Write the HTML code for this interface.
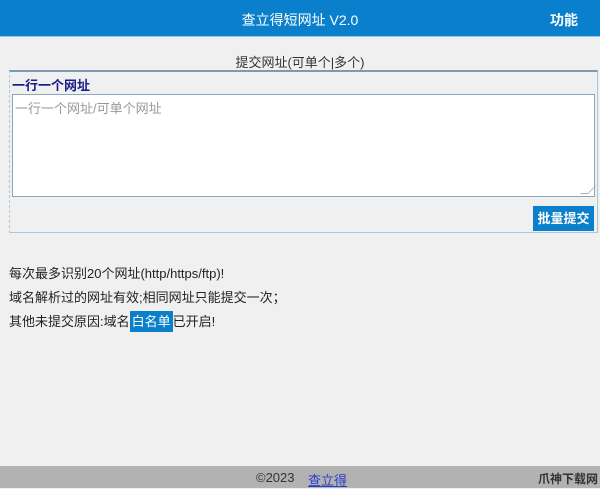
<!DOCTYPE html>
<html><head><meta charset="utf-8"><style>
*{margin:0;padding:0;box-sizing:border-box}
body{width:600px;height:488px;background:#f0f0f0;font-family:"Liberation Sans","Noto Sans CJK SC",sans-serif;position:relative;overflow:hidden;color:#222}
.hd{position:absolute;left:0;top:0;width:600px;height:37px;background:#0a7fcb;border-bottom:1px solid #8fc7ea}
.hd .t{position:absolute;left:0;width:600px;text-align:center;top:10px;color:#fff;font-size:14px}
.hd .f{position:absolute;right:22px;top:10px;color:#fff;font-size:14px;font-weight:bold}
.title{position:absolute;top:52px;width:600px;text-align:center;font-size:13px;color:#333}
.box{position:absolute;left:9px;top:70px;width:589px;height:163px;border:1px solid #a9c6da;border-top:2px solid #7a9bb2;border-left:1px dashed #b5c8d6}
.lbl{position:absolute;left:2px;top:3px;font-size:13px;font-weight:bold;color:#1a1a8c}
.ta{position:absolute;left:2px;top:22px;width:583px;height:103px;background:#fff;border:1px solid #8aa7bc;font-size:13px;color:#999;padding:3px 2px}
.ta i{position:absolute;right:2px;bottom:2px;width:8px;height:8px;border-right:1px solid #aaa;border-bottom:1px solid #aaa;transform:skewX(-45deg)}
.btn{position:absolute;left:523px;top:134px;width:61px;height:25px;background:#0a7fcb;color:#fff;font-size:13px;font-weight:bold;text-align:center;line-height:25px}
.n{position:absolute;left:9px;font-size:13px;color:#222}
.hl{background:#0a7fcb;color:#fff;padding:3px 2px}
.ft{position:absolute;left:0;top:466px;width:600px;height:22px;background:#b2b2b2;font-size:13px;color:#333}
.ft .c{position:absolute;left:256px;top:4px}
.ft a{position:absolute;left:308px;top:4px;color:#2a3fc8;text-decoration:underline}
.ft .w{position:absolute;right:2px;top:4px;color:#333;font-weight:bold;font-size:12px}
</style></head><body>
<div class="hd"><div class="t">查立得短网址 V2.0</div><div class="f">功能</div></div>
<div class="title">提交网址(可单个|多个)</div>
<div class="box">
<div class="lbl">一行一个网址</div>
<div class="ta">一行一个网址/可单个网址<i></i></div>
<div class="btn">批量提交</div>
</div>
<div class="n" style="top:263px">每次最多识别20个网址(http/https/ftp)!</div>
<div class="n" style="top:287px">域名解析过的网址有效;相同网址只能提交一次；</div>
<div class="n" style="top:311px">其他未提交原因:域名<span class="hl">白名单</span>已开启!</div>
<div class="ft"><span class="c">©2023</span><a>查立得</a><span class="w">爪神下载网</span></div>
</body></html>
